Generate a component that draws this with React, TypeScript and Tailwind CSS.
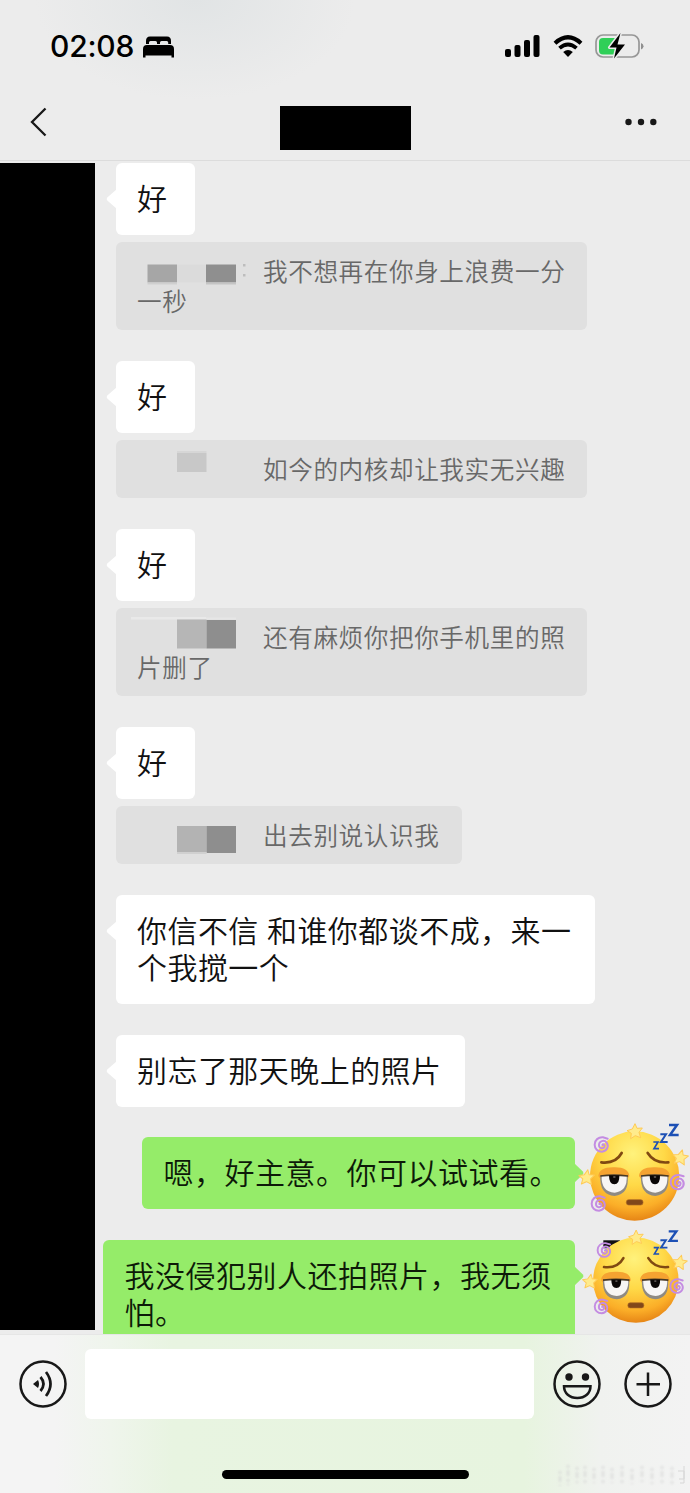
import clsx from "clsx";
import type { ReactNode } from "react";

type Block = { x: number; y: number; w: number; h: number; fill: string };

type Message = {
  lines: string[];
  width: string;
  quote?: { lines: string[]; width: string; blocks: Block[] };
};

const received: Message[] = [
  {
    lines: ["好"],
    width: "w-[79px]",
    quote: {
      lines: ["我不想再在你身上浪费一分", "一秒"],
      width: "w-[471px]",
      blocks: [
        { x: 10.5, y: 8.5, w: 29.5, h: 18, fill: "#a6a6a6" },
        { x: 40, y: 8.5, w: 29, h: 18, fill: "#dbdbdb" },
        { x: 69, y: 8.5, w: 30, h: 18, fill: "#8f8f8f" },
        { x: 10.5, y: 26.5, w: 29.5, h: 2, fill: "#cfcfcf" },
        { x: 69, y: 26.5, w: 30, h: 2, fill: "#c4c4c4" },
        { x: 106, y: 8, w: 2.5, h: 2.5, fill: "#bdbdbd" },
        { x: 106, y: 18, w: 2.5, h: 2.5, fill: "#bdbdbd" },
      ],
    },
  },
  {
    lines: ["好"],
    width: "w-[79px]",
    quote: {
      lines: ["如今的内核却让我实无兴趣"],
      width: "w-[471px]",
      blocks: [
        { x: 40, y: -3, w: 29.5, h: 2, fill: "#d6d6d6" },
        { x: 40, y: -1, w: 29.5, h: 19, fill: "#c8c8c8" },
      ],
    },
  },
  {
    lines: ["好"],
    width: "w-[79px]",
    quote: {
      lines: ["还有麻烦你把你手机里的照", "片删了"],
      width: "w-[471px]",
      blocks: [
        { x: -6, y: -5, w: 75, h: 2.5, fill: "#e9e9e9" },
        { x: 69, y: -4.5, w: 30, h: 2, fill: "#e6e6e6" },
        { x: 40, y: -2.5, w: 29.5, h: 29, fill: "#b6b6b6" },
        { x: 69.5, y: -2, w: 29.5, h: 28.5, fill: "#8e8e8e" },
      ],
    },
  },
  {
    lines: ["好"],
    width: "w-[79px]",
    quote: {
      lines: ["出去别说认识我"],
      width: "w-[346px]",
      blocks: [
        { x: 40, y: 6, w: 29.5, h: 26, fill: "#b3b3b3" },
        { x: 69.5, y: 6, w: 29.5, h: 27, fill: "#8e8e8e" },
        { x: 40, y: 32, w: 29.5, h: 2, fill: "#d0d0d0" },
      ],
    },
  },
  { lines: ["你信不信 和谁你都谈不成，来一", "个我搅一个"], width: "w-[479px]" },
  { lines: ["别忘了那天晚上的照片"], width: "w-[349.5px]" },
];

function Lines({ lines }: { lines: string[] }) {
  return (
    <>
      {lines.map((line) => (
        <p key={line}>{line}</p>
      ))}
    </>
  );
}

function Mosaic({ blocks }: { blocks: Block[] }) {
  return (
    <svg width="126" height="30" className="relative top-px inline-block overflow-visible align-top">
      {blocks.map((b, i) => (
        <rect key={i} x={b.x} y={b.y} width={b.w} height={b.h} fill={b.fill} />
      ))}
    </svg>
  );
}

function ReceivedMessage({ message }: { message: Message }) {
  const { quote } = message;
  return (
    <article className="flex flex-col items-start gap-[7px]">
      <div
        className={clsx(
          "relative rounded-md bg-white pt-4 pb-[19px] pl-[21.5px] text-[30px] leading-[37px] font-[350] tracking-[0.45px] whitespace-nowrap text-[#111] [word-spacing:1px]",
          message.width
        )}
      >
        <svg width="11" height="22" viewBox="0 0 11 22" className="absolute top-[25px] -left-[9.5px]">
          <path d="M11 1 1.6 9.2q-1.8 1.8 0 3.6L11 21z" fill="#fff" />
        </svg>
        <Lines lines={message.lines} />
      </div>
      {quote && (
        <div
          className={clsx(
            "mb-[0.5px] rounded-md bg-[#e0e0e0] pt-[13px] pb-[15px] pl-[21.5px] text-[24.6px] leading-[30px] font-[350] tracking-[0.6px] whitespace-nowrap text-[#686868]",
            quote.width
          )}
        >
          <p>
            <Mosaic blocks={quote.blocks} />
            {quote.lines[0]}
          </p>
          <Lines lines={quote.lines.slice(1)} />
        </div>
      )}
    </article>
  );
}

function Star({ x, y, rotate = 0 }: { x: number; y: number; rotate?: number }) {
  return (
    <path
      d="M0-24 6-10 22-11 12 2 17 18 1 12-13 21-11 5-24-3-8-8z"
      transform={`translate(${x} ${y}) rotate(${rotate})`}
      fill="#ffeb8c"
      stroke="#ffca55"
      strokeWidth="3"
      strokeLinejoin="round"
    />
  );
}

function Swirl({ x, y }: { x: number; y: number }) {
  return (
    <path
      d="M0 1c3-5 9 0 6 6-4 7-16 4-16-6 0-12 15-17 23-7 8 12 0 26-14 27-13 0-22-9-22-21 0-14 11-23 25-22l14 4"
      transform={`translate(${x} ${y})`}
      fill="none"
      stroke="#c48ce2"
      strokeWidth="6"
      strokeLinecap="round"
    />
  );
}

function Eye({ x }: { x: number }) {
  return (
    <g transform={`translate(${x} 0)`}>
      <path d="M-47 198q2-27 47-26 43-1 46 26l-6 8h-81z" fill="#f5a331" />
      <path d="M-41 198q40-6 82 0 5 55-39 60-46-4-43-60z" fill="#8f8a83" />
      <path d="M-37 197q38-5 75 0 3 46-36 51-41-3-39-51z" fill="#f7f5f4" />
      <path d="M-41 198q40-5 83 0" fill="none" stroke="#493a25" strokeWidth="5" />
      <path d="M-15 196h31q1 27-15 27t-16-27z" fill="#0b0707" />
      <ellipse cx="1" cy="201" rx="4" ry="3" fill="#5e5755" />
    </g>
  );
}

function Avatar({ width, className, marked = false }: { width: number; className: string; marked?: boolean }) {
  return (
    <svg
      viewBox="0 0 360 345"
      width={width}
      height={(width * 345) / 360}
      className={clsx("shrink-0 overflow-visible", className)}
    >
      <defs>
        <radialGradient id="face" cx="48%" cy="25%" r="78%">
          <stop offset="0" stopColor="#fff27c" />
          <stop offset="0.45" stopColor="#ffd947" />
          <stop offset="0.78" stopColor="#fbae28" />
          <stop offset="1" stopColor="#e27d12" />
        </radialGradient>
      </defs>
      {marked && <path d="M92 73h52v25H92z" fill="#111" />}
      <circle cx="194" cy="198" r="134" fill="url(#face)" />
      <path d="M94 157q43 5 61-28" fill="none" stroke="#804912" strokeWidth="8" strokeLinecap="round" />
      <path d="M233 129q20 32 62 28" fill="none" stroke="#804912" strokeWidth="8" strokeLinecap="round" />
      <Eye x={132} />
      <Eye x={254} />
      <rect x="169" y="269" width="50" height="16" rx="7" fill="#81471a" stroke="#a96622" strokeWidth="2" />
      <Star x={195} y={65} />
      <Star x={331} y={143} rotate={15} />
      <Star x={50} y={203} rotate={8} />
      <Swirl x={97} y={104} />
      <Swirl x={88} y={281} />
      <Swirl x={325} y={217} />
      <g fill="none" stroke="#1d50b5" strokeWidth="7.5">
        <path d="M297 45h24l-21 30h26" />
        <path d="M271 73h17l-15 23h20" strokeWidth="6" />
        <path d="M250 96h14l-12 20h15" strokeWidth="5" />
      </g>
    </svg>
  );
}

function SentMessage({ lines, width, avatar }: { lines: string[]; width: string; avatar: ReactNode }) {
  return (
    <article className="flex items-start justify-end">
      <div
        className={clsx(
          "relative rounded-md bg-[#95ec69] pt-4 pb-[19px] pl-[21.5px] text-[30px] leading-[37px] font-[350] tracking-[0.5px] whitespace-nowrap text-[#0d1a08]",
          width
        )}
      >
        <svg width="10" height="22" viewBox="0 0 10 22" className="absolute top-[25px] -right-[8.5px]">
          <path d="M0 1 8.6 9.2q1.6 1.8 0 3.6L0 21z" fill="#95ec69" />
        </svg>
        <Lines lines={lines} />
      </div>
      <div className="relative h-[72px] w-[115px] shrink-0">{avatar}</div>
    </article>
  );
}

function BedIcon() {
  return (
    <svg width="31" height="22" viewBox="0 0 31 22" fill="#000">
      <path d="M3 8V5q0-4.500 4-4.500h17q4 0 4 4.500v3h-2.800V6.500q0-1.500-1.500-1.500h-5.200q-1.500 0-1.500 1.500V8h-3V6.500Q14 5 12.500 5h-5Q6 5 6 6.500V8z" />
      <path d="M0 13q0-4 4-4h23q4 0 4 4v8.500h-2.500v-2h-26v2H0z" />
    </svg>
  );
}

function StatusBar() {
  return (
    <div className="flex h-[92px] items-center pr-[46px] pl-[50px]">
      <span className="font-['Inter'] text-[30px] leading-none font-medium tracking-[-0.2px] text-black">02:08</span>
      <span className="ml-[9px] pt-0.5">
        <BedIcon />
      </span>
      <div className="ml-auto flex items-center">
        <svg width="35" height="22" viewBox="0 0 35 22">
          <rect x="0" y="14" width="6" height="8" rx="2" />
          <rect x="9.500" y="10" width="6" height="12" rx="2" />
          <rect x="19" y="5" width="6" height="17" rx="2" />
          <rect x="28.500" y="0" width="6" height="22" rx="2" />
        </svg>
        <svg width="30" height="22" viewBox="0 0 30 22" className="ml-[13px]">
          <path d="M2 8.200Q15-3.600 28 8.200" fill="none" stroke="#000" strokeWidth="4.200" />
          <path d="M6.500 13.200q8.500-7.500 17 0" fill="none" stroke="#000" strokeWidth="3.800" />
          <path d="M10.200 17q4.800-4 9.600 0L15 22z" />
        </svg>
        <svg width="49" height="26" viewBox="0 0 49 26" className="ml-[12.5px]">
          <rect x="1" y="2" width="43" height="22" rx="7" fill="none" stroke="#979797" strokeWidth="1.700" />
          <path d="M46 10q2.500 1 2.500 3.300T46 16.500z" fill="#8f8f8f" />
          <path d="M8 5h13v16.500H8q-4 0-4-4V9q0-4 4-4z" fill="#30cf58" />
          <path
            d="M25.500 0 14.500 14.500h7L19 25.500 30 11.500h-7.500z"
            fill="#000"
            stroke="#ececec"
            strokeWidth="3"
            strokeLinejoin="round"
            paintOrder="stroke"
          />
        </svg>
      </div>
    </div>
  );
}

function Header() {
  return (
    <header className="h-[161px] shrink-0 border-b border-[#dcdcdc] bg-[radial-gradient(ellipse_160px_100px_at_195px_0px,#e1e4e5,#ececec)]">
      <StatusBar />
      <nav className="flex h-[60px] items-center justify-between pr-[33px] pl-[30px]">
        <svg width="17" height="30" viewBox="0 0 17 30" fill="none">
          <path d="M15.500 1.500 2 15l13.500 13.500" stroke="#181818" strokeWidth="2.300" />
        </svg>
        <div className="mt-[11.5px] ml-[18px] h-[43.5px] w-[131px] bg-black" />
        <svg width="32" height="8" viewBox="0 0 32 8" fill="#181818">
          <circle cx="3.500" cy="4" r="3.200" />
          <circle cx="16" cy="4" r="3.200" />
          <circle cx="28.300" cy="4" r="3.200" />
        </svg>
      </nav>
    </header>
  );
}

function RoundIcon({ children }: { children: ReactNode }) {
  return (
    <svg width="48" height="48" viewBox="0 0 48 48" fill="none" stroke="#181818" strokeWidth="2.500" className="shrink-0">
      <circle cx="24" cy="24" r="22.500" />
      {children}
    </svg>
  );
}

function InputBar() {
  return (
    <footer className="relative flex h-[159px] shrink-0 flex-col items-center border-t border-[#e6e6e6] bg-[linear-gradient(90deg,#f4f4f4_8%,#eff5ec_16%,#e8f4e1_25%,#e7f4df_76%,#f0f2ef_87%,#f3f3f3)]">
      <div className="flex w-full items-center pt-[13.5px] pl-[18.5px]">
        <RoundIcon>
          <path d="M14 24 19 20q2 4 0 8z" fill="#181818" stroke="none" />
          <path d="M21.500 17q6 7 0 14" strokeWidth="2.700" />
          <path d="M27 12q9 12 0 24" strokeWidth="2.700" />
        </RoundIcon>
        <div className="ml-[18.5px] h-[70px] w-[449px] rounded-md bg-white" />
        <span className="ml-[18.5px]">
          <RoundIcon>
            <circle cx="16" cy="17" r="3.700" fill="#181818" stroke="none" />
            <circle cx="32.500" cy="17" r="3.700" fill="#181818" stroke="none" />
            <path d="M11 26.300h26.500c0 7-5.500 11.700-13.200 11.700s-13.300-4.700-13.300-11.700z" />
          </RoundIcon>
        </span>
        <span className="ml-[23px]">
          <RoundIcon>
            <path d="M24 12.500v23.500M12.500 24.200H36" />
          </RoundIcon>
        </span>
      </div>
      <div className="mt-[51.5px] h-[9px] w-[247px] rounded-full bg-black" />
      <svg width="134" height="24" viewBox="0 0 134 24" className="absolute right-0 bottom-1.5 opacity-50">
        <g stroke="#d2d2d2" strokeWidth="3" strokeDasharray="3 2 6 3" className="blur-[1px]">
          <path d="M4 8v15M12 2v20M21 4v16M29 3v17M38 5v15M47 3v18M56 5v15M66 3v18M76 6v15M86 3v16M96 5v16M106 3v17M116 4v17" />
        </g>
        <path d="M122 8h6v8h-5M128 3v17h-4" fill="none" stroke="#bcbcbc" />
      </svg>
    </footer>
  );
}

export default function App() {
  return (
    <main className="flex h-[1493px] w-[690px] flex-col overflow-hidden bg-[#ececec] font-['Noto_Sans_CJK_SC',sans-serif]">
      <Header />
      <section className="flex h-[1173px] shrink-0 overflow-hidden">
        <aside className="mt-0.5 h-[1167px] w-[95px] shrink-0 bg-black" />
        <div className="flex w-[595px] flex-col gap-[30.5px] pt-[2px]">
          <div className="flex flex-col gap-[30.5px] pl-[20.5px]">
            {received.map((message, i) => (
              <ReceivedMessage key={i} message={message} />
            ))}
          </div>
          <SentMessage
            lines={["嗯，好主意。你可以试试看。"]}
            width="w-[433px]"
            avatar={<Avatar width={120} className="absolute -top-[27px] -left-[5px]" />}
          />
          <SentMessage
            lines={["我没侵犯别人还拍照片，我无须", "怕。"]}
            width="w-[472px]"
            avatar={<Avatar width={114.8} className="absolute -top-[23px] -left-[1px]" marked />}
          />
        </div>
      </section>
      <InputBar />
    </main>
  );
}
